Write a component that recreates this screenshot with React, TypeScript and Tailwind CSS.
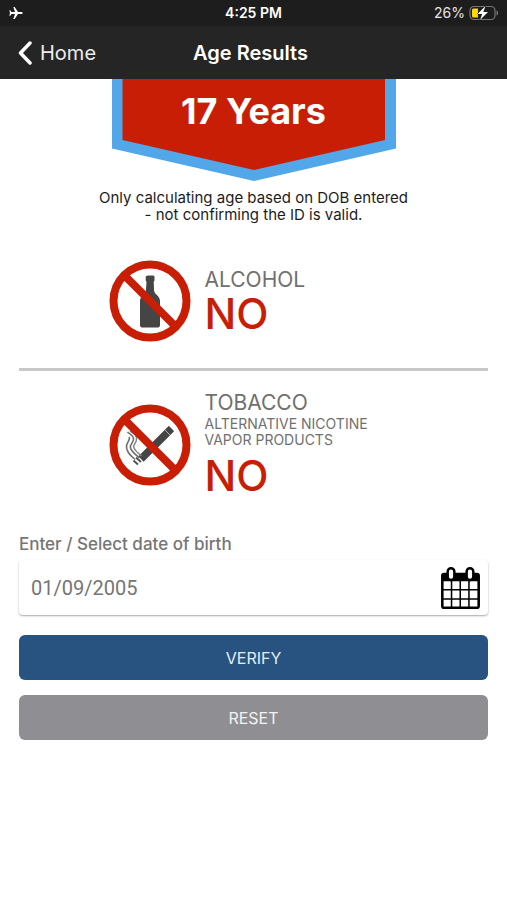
import { useState } from "react";
import type { ReactNode } from "react";

function StatusBar() {
  return (
    <div className="grid h-[26px] grid-cols-3 items-center bg-[#1d1d1d] px-2 text-[14px] leading-5 text-[#e6e6e6]">
      <svg viewBox="0 0 24 24" className="size-4 rotate-90 fill-white" aria-label="Airplane mode">
        <path d="M21 16v-2l-7.500-5V3.500a1.500 1.500 0 0 0-3 0V9L3 14v2l7.500-2.500V19L8 20.500V22l4-1 4 1v-1.500L13.500 19v-5.500L21 16z" />
      </svg>
      <span className="text-center font-semibold text-white">4:25 PM</span>
      <span className="flex items-center justify-end gap-1">
        26%
        <svg viewBox="0 0 30 16" width="30" height="16" aria-label="Battery charging">
          <rect x="1" y="1.500" width="25" height="13" rx="4" fill="none" stroke="#777" strokeWidth="1.200" />
          <path d="M27.500 5.500c2.200.6 2.200 4.400 0 5z" fill="#777" />
          <path d="M4.500 3.500H9v9H4.500a1.500 1.500 0 0 1-1.500-1.500V5a1.500 1.500 0 0 1 1.500-1.500z" fill="#fcd90b" />
          <path d="M16.500 1 8.500 9h4.700l-2.200 6 8-8h-4.700z" fill="#fff" stroke="#1d1d1d" strokeWidth="1" paintOrder="stroke" />
        </svg>
      </span>
    </div>
  );
}

function Header() {
  return (
    <header className="grid h-[53px] grid-cols-[1fr_auto_1fr] items-center bg-[#252525] pr-6 pl-[18px] text-xl text-white">
      <a href="#home" className="flex items-center gap-2 text-[#ececec]">
        <svg viewBox="0 0 14 24" className="h-6 w-[14px]" fill="none" stroke="#fff" strokeWidth="3.500">
          <path d="M12 2 2.500 12 12 22" strokeLinecap="round" strokeLinejoin="round" />
        </svg>
        Home
      </a>
      <h1 className="font-semibold">Age Results</h1>
    </header>
  );
}

function AgeBanner({ age }: { age: number }) {
  return (
    <div className="relative mx-auto h-[102px] w-[284px]">
      <svg viewBox="0 0 284 102" className="absolute inset-0 size-full" aria-hidden="true">
        <path d="M0 0h284v69.500L142 102 0 69.500z" fill="#51a7e8" />
        <path d="M10.500 0h262.500v61L142 91 10.500 61z" fill="#c91e06" />
      </svg>
      <p className="relative pt-3 text-center text-4xl font-bold text-white">{age} Years</p>
    </div>
  );
}

function Prohibited({ children }: { children: ReactNode }) {
  return (
    <svg viewBox="0 0 82 82" className="size-[82px] shrink-0" aria-hidden="true">
      {children}
      <circle cx="41" cy="41" r="36.500" fill="none" stroke="#c91e06" strokeWidth="8" />
      <path d="M16 16 66 66" stroke="#c91e06" strokeWidth="8" />
    </svg>
  );
}

function Bottle() {
  return (
    <path
      d="M38.500 15.500h6l1 1v4l-.8 1.200.4 9c.4 3.500 5.900 5.300 5.900 10.300v25l-1.500 1.500h-17L31 66V41c0-5 5.500-6.800 5.900-10.300l.6-9-.8-1.200v-4z"
      fill="#454545"
    />
  );
}

function Cigarette() {
  return (
    <g fill="none">
      <path d="M32 55 62.500 24.500" stroke="#454545" strokeWidth="7.500" />
      <path d="M56 26 61 31" stroke="#fff" strokeWidth="0.600" />
      <path d="M18.500 28c2 2 6 3 6 7s-4 5-3 9 5 6 9 10" stroke="#707070" strokeWidth="1.600" />
      <path d="M21 27c4 3 7 4 6.500 8.500s-4 5-2.500 8.500 4 5 7.500 8" stroke="#858585" strokeWidth="1.500" />
      <path d="M20 33c2 2-2 5-2.500 9s3 9 8.500 13.500" stroke="#707070" strokeWidth="1.600" />
      <path d="M24.500 56.500 29 60.500M27 53.500 32 58" stroke="#555" strokeWidth="2" />
    </g>
  );
}

function Verdict({ icon, title, detail }: { icon: ReactNode; title: string; detail?: string }) {
  return (
    <section className="mx-auto flex w-[290px] items-center gap-[14px]">
      <Prohibited>{icon}</Prohibited>
      <div>
        <h2 className="text-[21px] leading-[26px] text-[#707070]">{title}</h2>
        {detail && <p className="w-44 text-sm leading-4 text-[#707070]">{detail}</p>}
        <p className={`text-[42px] font-medium text-[#c91e06] ${detail ? "mt-1 leading-[48px]" : "leading-[42px]"}`}>
          NO
        </p>
      </div>
    </section>
  );
}

function CalendarIcon() {
  return (
    <svg viewBox="0 0 38 41" width="39" height="42" aria-hidden="true">
      <rect x="0" y="5.500" width="38" height="35.500" rx="3" fill="#000" />
      <path
        d="M2.500 14h7v7.500h-7zM11 14h7v7.500h-7zM19.500 14h7v7.500h-7zM28 14h7.500v7.500H28zM2.500 23h7v7.500h-7zM11 23h7v7.500h-7zM19.500 23h7v7.500h-7zM28 23h7.500v7.500H28zM2.500 32h7v6.500h-7zM11 32h7v6.500h-7zM19.500 32h7v6.500h-7zM28 32h7.500v6.500H28z"
        fill="#fff"
      />
      <rect x="6.500" y="1.200" width="6.500" height="11.500" rx="3.200" fill="#fff" stroke="#000" strokeWidth="2.400" />
      <rect x="25" y="1.200" width="6.500" height="11.500" rx="3.200" fill="#fff" stroke="#000" strokeWidth="2.400" />
    </svg>
  );
}

export default function App() {
  const [dob, setDob] = useState("01/09/2005");

  return (
    <div className="min-h-screen bg-white font-['Inter',sans-serif]">
      <StatusBar />
      <Header />
      <main>
        <AgeBanner age={17} />
        <p className="mt-2 text-center text-[15px] leading-[17px] text-[#1c1c1c]">
          Only calculating age based on DOB entered
          <br />- not confirming the ID is valid.
        </p>
        <div className="mt-[37px] px-[19px]">
          <Verdict icon={<Bottle />} title="ALCOHOL" />
          <hr className="mt-[26px] mb-[19px] border-t-[3px] border-[#c8c8c8]" />
          <Verdict icon={<Cigarette />} title="TOBACCO" detail="ALTERNATIVE NICOTINE VAPOR PRODUCTS" />
        </div>
        <form className="mt-8 px-[19px]" onSubmit={(e) => e.preventDefault()}>
          <label htmlFor="dob" className="block text-[17px] leading-6 font-medium text-[#757575]">
            Enter / Select date of birth
          </label>
          <div className="mt-1 flex h-[55px] items-center rounded bg-white pr-2 pl-3 shadow-[0_1px_2px_rgba(0,0,0,0.35)]">
            <input
              id="dob"
              value={dob}
              onChange={(e) => setDob(e.target.value)}
              className="min-w-0 flex-1 font-['Roboto',sans-serif] text-xl text-[#757575] outline-none"
            />
            <button type="button" aria-label="Pick a date">
              <CalendarIcon />
            </button>
          </div>
          <button type="submit" className="mt-5 h-[45px] w-full rounded-md bg-[#28527f] text-base text-[#e4edf5]">
            VERIFY
          </button>
          <button
            type="reset"
            onClick={() => setDob("")}
            className="mt-[15px] h-[45px] w-full rounded-md bg-[#8f8e93] text-base text-[#f2f2f2]"
          >
            RESET
          </button>
        </form>
      </main>
    </div>
  );
}
